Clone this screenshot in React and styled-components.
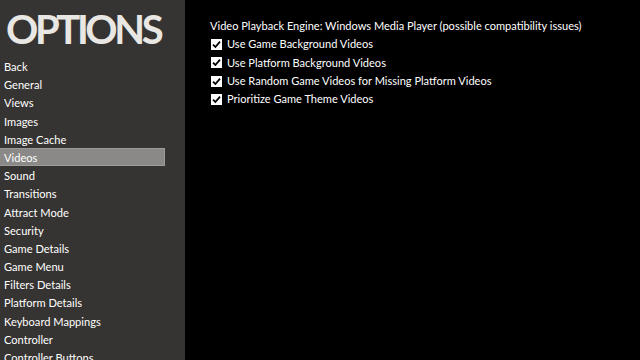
import React from "react";
import styled, { createGlobalStyle } from "styled-components";

const GlobalStyle = createGlobalStyle`
  html, body {
    margin: 0;
    padding: 0;
    background: #000;
  }
  body {
    width: 640px;
    height: 360px;
    overflow: hidden;
  }
`;

const menu = [
  "Back",
  "General",
  "Views",
  "Images",
  "Image Cache",
  "Videos",
  "Sound",
  "Transitions",
  "Attract Mode",
  "Security",
  "Game Details",
  "Game Menu",
  "Filters Details",
  "Platform Details",
  "Keyboard Mappings",
  "Controller",
  "Controller Buttons"
];

const options = [
  "Use Game Background Videos",
  "Use Platform Background Videos",
  "Use Random Game Videos for Missing Platform Videos",
  "Prioritize Game Theme Videos"
];

export default function App() {
  return (
    <>
      <GlobalStyle />
      <Screen>
        <Sidebar>
          <Title>OPTIONS</Title>
          <Menu>
            {menu.map(item => (
              <MenuItem key={item} $active={item === "Videos"}>
                {item}
              </MenuItem>
            ))}
          </Menu>
        </Sidebar>
        <Content>
          <Line>
            Video Playback Engine: Windows Media Player (possible compatibility
            issues)
          </Line>
          {options.map(opt => (
            <CheckRow key={opt}>
              <Box>
                <svg width="9" height="9" viewBox="0 0 9 9">
                  <path
                    d="M1 4.6 L3.4 7 L8 1.6"
                    fill="none"
                    stroke="#000"
                    strokeWidth="1.8"
                  />
                </svg>
              </Box>
              <span>{opt}</span>
            </CheckRow>
          ))}
        </Content>
      </Screen>
    </>
  );
}

const Screen = styled.div`
  display: flex;
  width: 640px;
  height: 360px;
  background: #000;
  overflow: hidden;
  font-family: "Lato", "Liberation Sans", sans-serif;
  color: #fff;
`;

const Sidebar = styled.div`
  width: 185px;
  flex-shrink: 0;
  background: #363432;
  padding-top: 6px;
`;

const Title = styled.div`
  font-family: "Lato", "Liberation Sans", sans-serif;
  font-weight: 700;
  font-size: 40px;
  line-height: 46px;
  color: #e9e7e3;
  padding-left: 6px;
  letter-spacing: -3.4px;
`;

const Menu = styled.div`
  display: flex;
  flex-direction: column;
  margin-top: 5px;
`;

const MenuItem = styled.div`
  width: 165px;
  box-sizing: border-box;
  height: 18.2px;
  line-height: 17px;
  padding-left: 4px;
  font-size: 11.1px;
  white-space: nowrap;
  background: ${p => (p.$active ? "#8a8987" : "transparent")};
  border: 1px solid ${p => (p.$active ? "#9c9b99" : "transparent")};
  border-left: none;
`;

const Content = styled.div`
  padding: 17px 0 0 25px;
  display: flex;
  flex-direction: column;
  font-size: 11.05px;
`;

const Line = styled.div`
  height: 18.3px;
  line-height: 18px;
  white-space: nowrap;
`;

const CheckRow = styled(Line)`
  display: flex;
  align-items: center;
  gap: 5px;
  padding-left: 1px;
`;

const Box = styled.div`
  width: 11px;
  height: 11px;
  background: #fff;
  display: flex;
  align-items: center;
  justify-content: center;
`;
